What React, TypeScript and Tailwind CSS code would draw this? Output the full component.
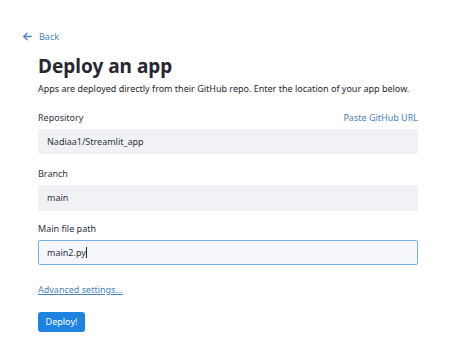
import React from "react";

export default function App() {
  return (
    <div className="w-[474px] h-[356px] bg-white text-[#31333f]" style={{ fontFamily: '"Noto Sans", "Open Sans", sans-serif' }}>
      <div className="pt-[31px] pl-[22px] flex items-center gap-[6px] text-[#4a82c3] text-[9px] leading-none">
        <svg width="11" height="11" viewBox="0 0 24 24" fill="none" stroke="#4a82c3" strokeWidth="2.8" strokeLinecap="round" strokeLinejoin="round">
          <path d="M20 12H4" />
          <path d="M11 5l-7 7 7 7" />
        </svg>
        <span>Back</span>
      </div>
      <div className="pl-[38px] pr-[56px]">
        <h1 className="mt-[15px] text-[19px] font-bold leading-none text-[#262730]">Deploy an app</h1>
        <p className="mt-[8px] text-[9px] leading-none text-[#262730]">Apps are deployed directly from their GitHub repo. Enter the location of your app below.</p>

        <div className="mt-[20px] flex justify-between items-end text-[9px] leading-none">
          <span>Repository</span>
          <span className="text-[#4a82c3]">Paste GitHub URL</span>
        </div>
        <div className="mt-[7px] h-[25px] bg-[#f0f2f6] rounded-[2px] flex items-center pl-[9px] text-[9px]">Nadiaa1/Streamlit_app</div>

        <div className="mt-[15px] text-[9px] leading-none">Branch</div>
        <div className="mt-[7px] h-[26px] bg-[#f0f2f6] rounded-[2px] flex items-center pl-[9px] text-[9px]">main</div>

        <div className="mt-[13px] text-[9px] leading-none">Main file path</div>
        <div className="mt-[7px] h-[25px] bg-[#f5f7fa] rounded-[2px] border border-[#79aee0] flex items-center pl-[8px] text-[9px]">
          main2.py<span className="inline-block w-px h-[11px] bg-[#262730]" />
        </div>

        <div className="mt-[20px] text-[9px] leading-none text-[#4a82c3] underline">Advanced settings...</div>

        <button className="mt-[18px] w-[47px] h-[20px] rounded-[3px] bg-[#1c83e1] text-white text-[9px] flex items-center justify-center">Deploy!</button>
      </div>
    </div>
  );
}
